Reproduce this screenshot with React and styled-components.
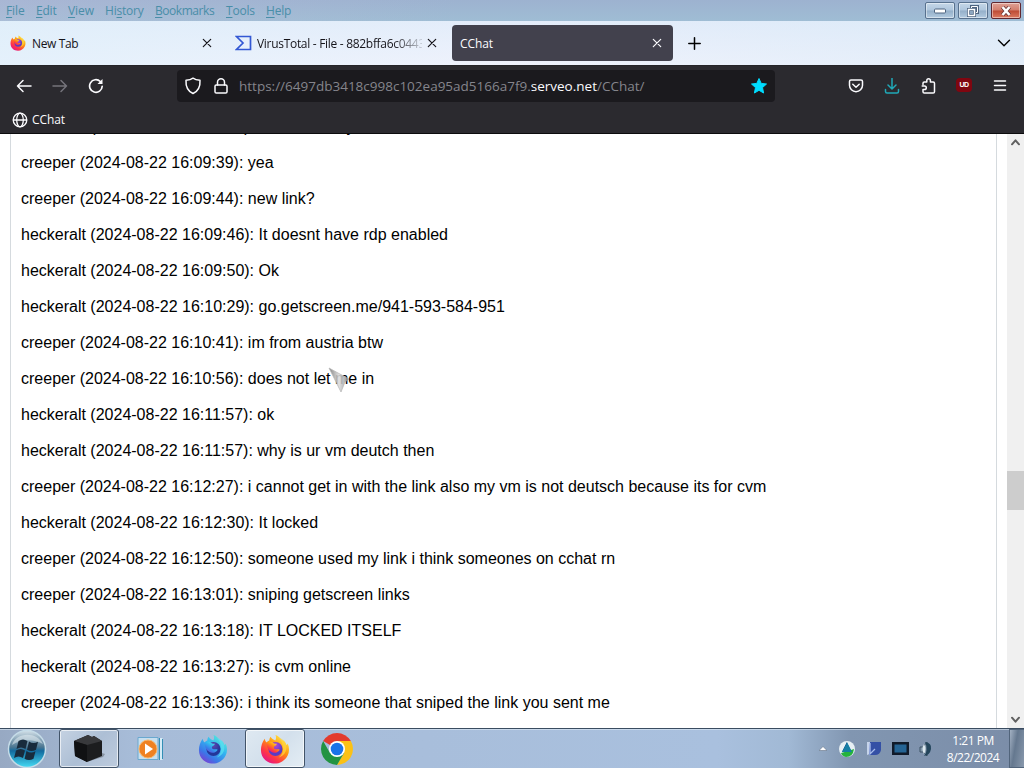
import React from "react";
import styled, { createGlobalStyle } from "styled-components";

const Global = createGlobalStyle`
  * { box-sizing: border-box; }
  body { margin: 0; background: #fff; overflow: hidden; }
  svg { display: block; flex: none; }
`;
const ui = `"Open Sans", "Noto Sans", sans-serif`;

const Screen = styled.div`
  width: 1024px; height: 768px; display: flex; flex-direction: column;
  overflow: hidden; font-family: ${ui}; background: #fff;
`;
const MenuBar = styled.header`
  height: 21px; flex: none; display: flex; justify-content: space-between;
  background: linear-gradient(90deg, rgba(190,190,220,.35), rgba(160,190,215,0) 45%), linear-gradient(#9db2d0, #9fbdd4);
`;
const Menus = styled.nav`display: flex; padding: 1px 0 0 6px;`;
const MenuItem = styled.span`
  width: ${p => p.$w}px; font-size: 12px; line-height: 19px; color: #498ea8;
  letter-spacing: ${p => p.$ls || 0}px; white-space: nowrap;
  u { text-underline-offset: 2px; text-decoration-thickness: 1px; }
`;
const WindowButtons = styled.div`display: flex; gap: 3px; padding: 2px 3px 0 0;`;
const WindowButton = styled.span`
  width: 30px; height: 17px; display: flex; align-items: center; justify-content: center;
  border: 1px solid ${p => p.$close ? "#61272f" : "#58718e"}; border-radius: 2px;
  box-shadow: inset 0 0 0 1px rgba(255,255,255,.45);
  background: ${p => p.$close
    ? "linear-gradient(#dfa196, #d27d6c 48%, #bd4a34 52%, #dc7a60)"
    : "linear-gradient(#c5d7e8, #afc6dd 48%, #94afc9 52%, #b3cbe0)"};
`;

const TabStrip = styled.div`
  height: 44px; flex: none; display: flex; align-items: flex-start; padding: 4px 12px 0 2px;
  background: linear-gradient(90deg, rgba(226,240,251,.8), rgba(238,240,252,.5) 50%, rgba(222,235,248,.7)), linear-gradient(#d9e9f8, #f0f4fc);
`;
const Tab = styled.div`
  width: ${p => p.$w}px; height: 36px; margin-right: ${p => p.$mr || 0}px;
  display: flex; align-items: center; gap: ${p => p.$gap || 0}px;
  padding: 0 ${p => p.$active ? 11 : 10}px 0 8px; border-radius: 4px;
  color: ${p => p.$active ? "#fbfbfe" : "#15141a"};
  background: ${p => p.$active ? "#42414d" : "transparent"};
`;
const TabTitle = styled.span`
  flex: 1; min-width: 0; overflow: hidden; white-space: nowrap; font-size: 12px; line-height: 18px; padding-top: 2px;
  letter-spacing: ${p => p.$ls || 0}px;
  ${p => p.$fade && "mask-image: linear-gradient(90deg, #000 82%, rgba(0,0,0,.15));"}
`;
const StripButton = styled.span`
  height: 36px; display: flex; align-items: center; margin-left: ${p => p.$push ? "auto" : p.$ml + "px"};
`;

const NavBar = styled.div`
  height: 40px; flex: none; display: flex; align-items: center; padding: 0 16px;
  background: #2b2a2f; border-top: 1px solid #252428;
`;
const NavIcons = styled.div`display: flex; gap: 20px; width: 161px;`;
const UrlBar = styled.div`
  width: 598px; height: 32px; display: flex; align-items: center; padding: 0 7px;
  background: #1b1a1e; border-radius: 4px;
`;
const Gap = styled.span`width: 11px;`;
const UrlText = styled.span`
  flex: 1; margin-left: 10px; font-size: 13.5px; line-height: 20px;
  white-space: nowrap; color: #85858c;
  b { font-weight: 400; color: #fbfbfe; }
`;
const Actions = styled.div`display: flex; gap: 20px; margin-left: 73px; align-items: center;`;
const UBlock = styled.span`
  width: 16px; height: 14px; display: flex; align-items: center; justify-content: center;
  background: #800610; border-radius: 4px; margin-top: -2px;
  color: #fff; font: 700 7px/14px "Liberation Sans", sans-serif; letter-spacing: -.5px;
`;
const Bookmarks = styled.div`
  height: 29px; flex: none; display: flex; align-items: center; gap: 4px; padding: 1px 12px 0;
  background: #2b2a2f; border-bottom: 1px solid #0c0c0d;
  color: #fbfbfe; font-size: 12px; letter-spacing: -0.1px;
`;

const Page = styled.main`height: 594px; flex: none; display: flex; background: #fff; overflow: hidden;`;
const ChatBox = styled.section`
  width: 987px; margin-left: 10px; padding-left: 10px; overflow: hidden;
  border: solid #d5dade; border-width: 0 1px;
`;
const Messages = styled.div`margin-top: -25px; display: flex; flex-direction: column;`;
const Message = styled.p`
  margin: 0; height: 36px; line-height: 36px; white-space: nowrap; color: #000;
  font-family: "Liberation Sans", Arial, sans-serif; font-size: 16px;
`;
const Scrollbar = styled.aside`
  width: 17px; margin-left: auto; background: #f0f0f0; display: flex; flex-direction: column;
  align-items: center; justify-content: space-between; padding: 4px 0;
`;
const Thumb = styled.div`width: 17px; height: 39px; background: #cdcdcd; margin-top: 118px;`;

const Taskbar = styled.footer`
  height: 40px; flex: none; display: flex; border-top: 1px solid #3a4c60;
  box-shadow: inset 0 1px 0 rgba(230,240,250,.55);
  background: linear-gradient(90deg, #97a9c3 0, #a7bcd8 13%, #a9c0de 70%, #a1b9d5 77%, #8196b1 83%, #7b8da8 100%);
`;
const Start = styled.div`width: 59px; padding-left: 7px;`;
const Task = styled.div`
  width: 60px; height: 39px; margin-right: ${p => p.$mr || 0}px; padding-left: ${p => p.$pl || 0}px;
  display: flex; align-items: center; justify-content: center;
  border: 1px solid ${p => p.$open ? "#425469" : "transparent"}; border-radius: 3px;
  ${p => p.$open && `box-shadow: inset 0 0 0 1px rgba(255,255,255,.65);`}
  background: ${p => !p.$open ? "none" : p.$focus ? "linear-gradient(135deg,#dfe9f2,#d3e0ec 50%,#e4edf4)" : "linear-gradient(135deg,#c5d2e2,#adbfd5 50%,#bdcbdd)"};
`;
const Tray = styled.div`display: flex; align-items: center; margin-left: auto; gap: 9px;`;
const TrayIcons = styled.div`display: flex; align-items: center; gap: 9px; margin-left: 2px;`;
const Clock = styled.div`
  width: 60px; margin-right: -3px; text-align: center; color: #fff; font-size: 12px; line-height: 17px;
  letter-spacing: -0.5px; white-space: nowrap;
`;
const ShowDesktop = styled.div`
  width: 15px; height: 39px; border: 1px solid #51647b; border-right: 0;
  background: linear-gradient(100deg, #a3b1c3, #65788f 40%, #8999ad);
`;
const Pointer = styled.div`position: absolute; left: 328px; top: 367px;`;

const Line = ({ size = 16, w = 1.5, color = "currentColor", box = 16, children }) => (
  <svg width={size} height={size} viewBox={`0 0 ${box} ${box}`} fill="none" stroke={color} strokeWidth={w} strokeLinecap="round" strokeLinejoin="round">{children}</svg>
);
const CloseX = () => <Line size={10} box={10} w={1.2}><path d="M1.300 1.300l7.400 7.400M8.700 1.300L1.300 8.700" /></Line>;

const Firefox = ({ size, blue }) => {
  const id = blue ? "foxBlue" : "foxRed" + size;
  return (
    <svg width={size} height={size} viewBox="0 0 32 32">
      <defs>
        <linearGradient id={id} x1=".85" y1=".05" x2=".2" y2=".95">
          <stop offset="0" stopColor={blue ? "#5df0d8" : "#fff44f"} />
          <stop offset=".4" stopColor={blue ? "#32b5f0" : "#ff980e"} />
          <stop offset=".75" stopColor={blue ? "#3b78e8" : "#ff3647"} />
          <stop offset="1" stopColor={blue ? "#7542d5" : "#e31587"} />
        </linearGradient>
        <radialGradient id={id + "c"} cx=".5" cy=".25"><stop stopColor={blue ? "#5d49b0" : "#b44ad8"} /><stop offset="1" stopColor={blue ? "#23369a" : "#5a3bc4"} /></radialGradient>
      </defs>
      <path fill={`url(#${id})`} d="M5 5c.5 2 1 3 2 4 1-1.300 2-1.800 3-2.200 0-1.300.4-2.800 1.300-3.800 1 2 3 3 5 4 1-1.800 1.200-4 .2-6 3 1 5 3 6 5 3 1 5 3 6 6l1-2c2 4 2 9 0 13C27 28 22 31.500 16 31.500 8 31.500 1 26 1 17c0-4.500 1.500-8.500 4-12z" />
      <circle cx="16.500" cy="16" r="7.500" fill={`url(#${id}c)`} />
      <path fill={`url(#${id})`} d="M7 9c3-2 6-1 8 1 1 .2 2 .2 3 .5-.3 1.700-2 2-3 3-.5 1 0 2 1 2.500 2 1 3-.5 5 .7-1.500 3.300-6 4.300-9 2.300C8.500 17 7 13.500 7 9z" />
      <path fill={blue ? "#59dff0" : "#ffd53d"} d="M20 4c2 2 4 5 4 8 2 6-1 11-4 13 7-2 10-9 7-16-1-2-4-4-7-5z" opacity=".75" />
    </svg>
  );
};

const StartOrb = () => (
  <svg width="40" height="39" viewBox="0 0 40 39">
    <defs>
      <linearGradient id="orb" x1="0" y1="0" x2="0" y2="1"><stop stopColor="#d3e0e8" /><stop offset=".45" stopColor="#4a7591" /><stop offset=".55" stopColor="#126a9e" /><stop offset="1" stopColor="#45dcf5" /></linearGradient>
    </defs>
    <circle cx="20" cy="20" r="18.500" fill="url(#orb)" stroke="#c5dce8" strokeWidth="1.500" />
    <path d="M5 16C8 4 29 1 36 15c-10-5-21-5-31 1z" fill="#e9f2f6" opacity=".5" />
    <path fill="#182b3d" d="M11.500 12c3-2 6-2 9 0l-2 8c-3-2-6-2-9 0zM22 12.500c3 2 6 2 9 .2l-2 8c-3 1.800-6 1.800-9 0zM9 21.500c3-2 6-2 9 0l-2 7.500c-3-2-6-2-9 0zM19.500 22c3 2 6 2 9 .2l-2 7.500c-3 1.800-6 1.800-9 0z" />
  </svg>
);
const Box = () => (
  <svg width="34" height="30" viewBox="0 0 34 30">
    <path fill="#222" opacity=".3" d="M14 28l17-5 2-3-6-2z" />
    <path fill="#1c1d1f" d="M2 7L16 1l4 2 2-1 8 5v15l-15 6L3 22z" />
    <path fill="#38393c" d="M2 7l14-6 4 2 2-1 8 5-15 4z" />
    <path fill="#101113" d="M2 7l13 4v17L3 22z" />
  </svg>
);
const MediaPlayer = () => (
  <svg width="28" height="26" viewBox="0 0 28 26">
    <path fill="#c7dfef" stroke="#6aa8cf" d="M1 1.500h20v22H1z" />
    <path stroke="#d5ecf7" strokeWidth="3" d="M24 2v22" /><path stroke="#338fb5" d="M22.500 2v22M25.500 3v20" />
    <circle cx="11" cy="13" r="9" fill="#ef8122" stroke="#f8b66a" /><path fill="#fff" d="M8 7.500v11l8-5.500z" />
  </svg>
);
const Chrome = () => (
  <svg width="32" height="32" viewBox="0 0 32 32">
    <path fill="#e33b2e" d="M16 16L2.150 8a16 16 0 0 1 27.700 0z" />
    <path fill="#fbc116" d="M16 16V8h13.850A16 16 0 0 1 16 32l7-12z" />
    <path fill="#229342" d="M2.150 8A16 16 0 0 0 16 32l7-12-7-2-7 2z" />
    <circle cx="16" cy="16" r="8" fill="#fff" /><circle cx="16" cy="16" r="6.300" fill="#1a73e8" />
  </svg>
);

const menus = [["File", 30, -0.1], ["Edit", 32, -0.2], ["View", 37, -0.1], ["History", 50, -0.2], ["Bookmarks", 71, -0.45], ["Tools", 40, -0.2], ["Help", 40, -0.2]];
const chat = [
  ["heckeralt", "09:31", "it works sadly"],
  ["creeper", "09:39", "yea"],
  ["creeper", "09:44", "new link?"],
  ["heckeralt", "09:46", "It doesnt have rdp enabled"],
  ["heckeralt", "09:50", "Ok"],
  ["heckeralt", "10:29", "go.getscreen.me/941-593-584-951"],
  ["creeper", "10:41", "im from austria btw"],
  ["creeper", "10:56", "does not let me in"],
  ["heckeralt", "11:57", "ok"],
  ["heckeralt", "11:57", "why is ur vm deutch then"],
  ["creeper", "12:27", "i cannot get in with the link also my vm is not deutsch because its for cvm"],
  ["heckeralt", "12:30", "It locked"],
  ["creeper", "12:50", "someone used my link i think someones on cchat rn"],
  ["creeper", "13:01", "sniping getscreen links"],
  ["heckeralt", "13:18", "IT LOCKED ITSELF"],
  ["heckeralt", "13:27", "is cvm online"],
  ["creeper", "13:36", "i think its someone that sniped the link you sent me"],
];

export default function App() {
  return (
    <Screen>
      <Global />
      <MenuBar>
        <Menus>{menus.map(([t, w, ls]) => <MenuItem key={t} $w={w} $ls={ls}>{t === "History" ? <>Hi<u>s</u>tory</> : <><u>{t[0]}</u>{t.slice(1)}</>}</MenuItem>)}</Menus>
        <WindowButtons>
          <WindowButton><svg width="12" height="6" viewBox="0 0 12 6"><rect x=".5" y="1" width="11" height="4" rx="1" fill="#fff" stroke="#4e6480" /></svg></WindowButton>
          <WindowButton><svg width="12" height="12" viewBox="0 0 12 12" fill="none"><path d="M4.500 1.500h6v6h-6z" stroke="#4e6480" strokeWidth="3" /><path d="M4.500 1.500h6v6h-6z" stroke="#fff" /><path d="M1.500 4.500h6v6h-6z" fill="#8ca6c0" stroke="#4e6480" strokeWidth="3" /><path d="M1.500 4.500h6v6h-6z" stroke="#fff" strokeWidth="1.500" /></svg></WindowButton>
          <WindowButton $close><svg width="12" height="10" viewBox="0 0 12 10"><path d="M2.500 1l7 8M9.500 1l-7 8" stroke="#633" strokeWidth="4" /><path d="M2.500 1l7 8M9.500 1l-7 8" stroke="#fff" strokeWidth="2.600" /></svg></WindowButton>
        </WindowButtons>
      </MenuBar>

      <TabStrip>
        <Tab $w={220} $mr={5} $gap={6}><Firefox size={16} /><TabTitle $ls={-0.35}>New Tab</TabTitle><CloseX /></Tab>
        <Tab $w={220} $mr={5} $gap={5}>
          <svg width="17" height="16" viewBox="0 0 17 16"><path d="M1.500 1.500h14v13h-14L8 8z" fill="none" stroke="#3358d4" strokeWidth="1.700" /></svg>
          <TabTitle $fade $ls={-0.3}>VirusTotal - File - 882bffa6c0443</TabTitle><CloseX />
        </Tab>
        <Tab $w={221} $active><TabTitle $ls={-0.1}>CChat</TabTitle><CloseX /></Tab>
        <StripButton $ml={15}><Line size={13} box={13} w={1.5}><path d="M6.500.8v11.400M.8 6.500h11.400" /></Line></StripButton>
        <StripButton $push><Line w={1.4}><path d="M2.500 5.300L8 10.700l5.500-5.400" /></Line></StripButton>
      </TabStrip>

      <NavBar>
        <NavIcons>
          <Line color="#fbfbfe"><path d="M15 8H1.500M7 2.500L1.500 8 7 13.500" /></Line>
          <Line color="#75747b"><path d="M1 8h13.500M9 2.500L14.500 8 9 13.500" /></Line>
          <Line color="#fbfbfe" w={1.7}><path d="M14.200 8.300A6.300 6.300 0 1 1 12.300 3.500" /><path d="M14.500 1v5h-5z" fill="#fbfbfe" stroke="none" /></Line>
        </NavIcons>
        <UrlBar>
          <Line size={18} color="#fbfbfe" box={18}><path d="M9 1.200c2 1.600 4.500 2 7 2 .4 6.300-2 11-7 13.300C4 14.200 1.600 9.500 2 3.200c2.500 0 5-.4 7-2z" /></Line>
          <Gap />
          <Line color="#fbfbfe"><rect x="2" y="7" width="12" height="8" rx="1.300" /><path d="M4.500 7V4.300a3.500 3.500 0 0 1 7 0V7" /></Line>
          <UrlText>https://6497db3418c998c102ea95ad5166a7f9.<b>serveo.net</b>/CChat/</UrlText>
          <svg width="18" height="18" viewBox="0 0 18 18"><path fill="#00ddff" stroke="#00ddff" strokeLinejoin="round" d="M9 1.500l2.200 4.900 5.300.6-4 3.600 1.100 5.400L9 13.300 4.400 16l1.100-5.400L1.500 7l5.300-.6z" /></svg>
        </UrlBar>
        <Actions>
          <Line color="#fbfbfe"><path d="M3 2h10q1.500 0 1.500 1.500v3.700a6.500 6.500 0 0 1-13 0V3.500Q1.500 2 3 2zM4.800 6.300L8 9.300l3.200-3" /></Line>
          <Line color="#20a9b8"><path d="M8 .2v10.600M4 7l4 4 4-4M1.500 11.500v2q0 1.500 1.500 1.500h10q1.500 0 1.500-1.500v-2" /></Line>
          <Line color="#fbfbfe"><path d="M3 6.500V5.300q0-1.300 1.300-1.300H6.800V2.600a1.800 1.800 0 0 1 3.600 0V4h2.800q1.300 0 1.300 1.300v8.400q0 1.300-1.300 1.300H4.300Q3 15 3 13.700v-2.200h1.500a1.800 1.800 0 0 0 0-3.600H2.200" /></Line>
          <UBlock>UD</UBlock>
          <Line color="#fbfbfe"><path d="M2.500 3h11M2.500 7.500h11M2.500 12h11" /></Line>
        </Actions>
      </NavBar>
      <Bookmarks>
        <Line color="#fbfbfe" w={1.3}><circle cx="8" cy="8" r="6.800" /><ellipse cx="8" cy="8" rx="3.300" ry="6.800" /><path d="M1.500 8h13" /></Line>
        CChat
      </Bookmarks>

      <Page>
        <ChatBox><Messages>{chat.map(([n, t, m], i) => <Message key={i}>{n} (2024-08-22 16:{t}): {m}</Message>)}</Messages></ChatBox>
        <Scrollbar>
          <Line size={9} box={9} w={2} color="#606060"><path d="M1 6.300l3.500-4 3.500 4" /></Line>
          <Thumb />
          <Line size={9} box={9} w={2} color="#606060"><path d="M1 2.700l3.500 4 3.500-4" /></Line>
        </Scrollbar>
      </Page>

      <Taskbar>
        <Start><StartOrb /></Start>
        <Task $open><Box /></Task>
        <Task $mr={3} $pl={4}><MediaPlayer /></Task>
        <Task $mr={3} $pl={2}><Firefox size={30} blue /></Task>
        <Task $open $focus $mr={2}><Firefox size={30} /></Task>
        <Task><Chrome /></Task>
        <Tray>
          <svg width="8" height="5" viewBox="0 0 8 5"><path fill="#fff" stroke="#526075" strokeWidth=".5" d="M0 4.500L4 .5l4 4z" /></svg>
          <TrayIcons>
            <svg width="18" height="18" viewBox="0 0 18 18"><circle cx="9" cy="9" r="8" fill="#e7f0f4" /><path fill="#167fa5" d="M9 2l5 10-5-2-5 2z" /><path fill="#174b86" d="M9 2v8l-5 2z" /><path d="M3 13q8-2 13-4-1 8-8 8-4-1-5-4" fill="#25b33c" /><path fill="#167fa5" d="M9 3l5 9H4z" /></svg>
            <svg width="18" height="18" viewBox="0 0 18 18"><path fill="#c6d4ea" d="M2 2h5v11l-5 2z" /><path fill="#3450a5" d="M5 2h11v8q-1 5-6 5H4z" /><path d="M5 3v11l5-5" fill="none" stroke="#a8bceb" strokeWidth="1.300" /></svg>
            <svg width="17" height="14" viewBox="0 0 17 14"><path fill="#101a29" d="M0 0h17v13H0z" /><path fill="#256494" d="M2.500 2.500h12v8h-12z" /></svg>
            <svg width="16" height="18" viewBox="0 0 16 18"><path fill="#8398ac" stroke="#3c5264" d="M2 7h3l4-5v14l-4-4H2z" /><path fill="#24465c" d="M7 2q7 1 6 7t-7 7q5-6 1-14z" /><path d="M6 4q-3 5 0 10 3-5 0-10" fill="#dce8ee" /></svg>
          </TrayIcons>
          <Clock>1:21 PM<br />8/22/2024</Clock>
          <ShowDesktop />
        </Tray>
      </Taskbar>
      <Pointer>
        <svg width="24" height="27" viewBox="0 0 24 27"><defs><linearGradient id="ptr"><stop stopColor="#777" /><stop offset=".5" stopColor="#ddd" /><stop offset="1" stopColor="#888" /></linearGradient></defs><path fill="url(#ptr)" stroke="#aaa" strokeWidth=".7" opacity=".88" d="M1 1l20 11-4 3-4 10z" /></svg>
      </Pointer>
    </Screen>
  );
}
